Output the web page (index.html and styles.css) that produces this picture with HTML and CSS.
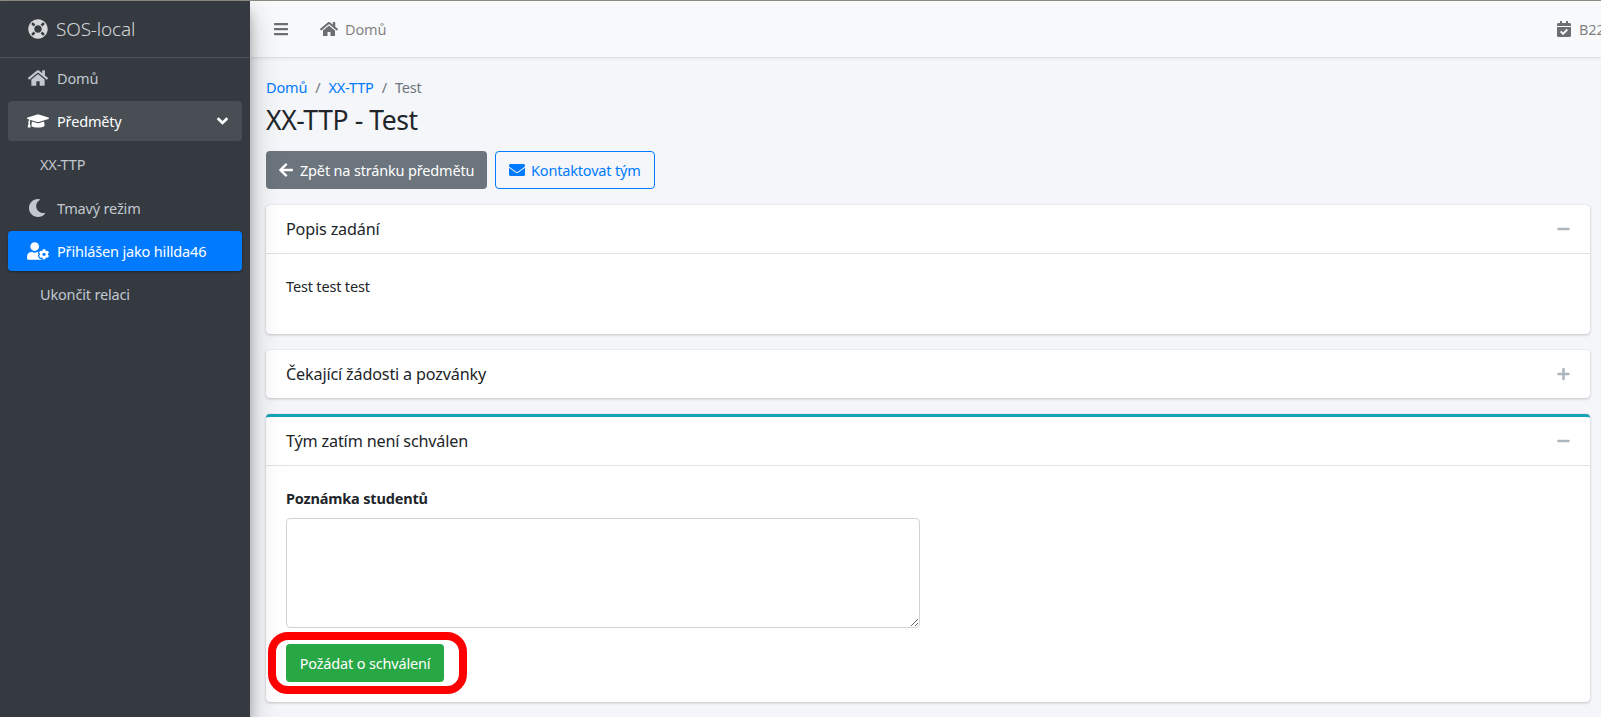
FILE: index.html
```html
<!DOCTYPE html>
<html lang="cs">
<head>
<meta charset="utf-8">
<title>XX-TTP - Test</title>
<link rel="stylesheet" href="styles.css">
</head>
<body>
<svg class="defs" aria-hidden="true">
  <symbol id="i-bars" viewBox="0 0 448 512"><path d="M16 132h416c8.837 0 16-7.163 16-16V76c0-8.837-7.163-16-16-16H16C7.163 60 0 67.163 0 76v40c0 8.837 7.163 16 16 16zm0 160h416c8.837 0 16-7.163 16-16v-40c0-8.837-7.163-16-16-16H16c-8.837 0-16 7.163-16 16v40c0 8.837 7.163 16 16 16zm0 160h416c8.837 0 16-7.163 16-16v-40c0-8.837-7.163-16-16-16H16c-8.837 0-16 7.163-16 16v40c0 8.837 7.163 16 16 16z"/></symbol>
  <symbol id="i-home" viewBox="0 0 576 512"><path d="M280.37 148.26L96 300.11V464a16 16 0 0 0 16 16l112.06-.29a16 16 0 0 0 15.92-16V368a16 16 0 0 1 16-16h64a16 16 0 0 1 16 16v95.64a16 16 0 0 0 16 16.05L464 480a16 16 0 0 0 16-16V300L295.67 148.26a12.19 12.19 0 0 0-15.3 0zM571.6 251.47L488 182.56V44.05a12 12 0 0 0-12-12h-56a12 12 0 0 0-12 12v72.61L318.47 43a48 48 0 0 0-61 0L4.34 251.47a12 12 0 0 0-1.6 16.9l25.5 31A12 12 0 0 0 45.15 301l235.22-193.74a12.19 12.19 0 0 1 15.3 0L530.9 301a12 12 0 0 0 16.9-1.6l25.5-31a12 12 0 0 0-1.7-16.93z"/></symbol>
  <symbol id="i-cap" viewBox="0 0 640 512"><path d="M622.34 153.2L343.4 67.5c-15.2-4.67-31.6-4.67-46.79 0L17.66 153.2c-23.54 7.23-23.54 38.36 0 45.59l48.63 14.94c-10.67 13.19-17.23 29.28-17.88 46.9C38.78 266.15 32 276.11 32 288c0 10.78 5.68 19.85 13.86 25.65L20.33 428.53C18.11 438.52 25.71 448 35.94 448h56.11c10.24 0 17.84-9.48 15.62-19.47L82.14 313.65C90.32 307.85 96 298.78 96 288c0-11.57-6.47-21.25-15.66-26.87.76-15.02 8.44-28.3 20.69-36.72L296.6 284.5c9.06 2.78 26.44 6.25 46.79 0l278.95-85.7c23.55-7.24 23.55-38.36 0-45.6zM352.79 315.09c-28.53 8.76-52.84 3.92-65.59 0l-145.02-44.55L128 384c0 35.35 85.96 64 192 64s192-28.65 192-64l-14.18-113.47-145.03 44.56z"/></symbol>
  <symbol id="i-moon" viewBox="0 0 512 512"><path d="M283.211 512c78.962 0 151.079-35.925 198.857-94.792 7.068-8.708-.639-21.43-11.562-19.35-124.203 23.654-238.262-71.576-238.262-196.954 0-72.222 38.662-138.635 101.498-174.394 9.686-5.512 7.25-20.197-3.756-22.23A258.156 258.156 0 0 0 283.211 0c-141.309 0-256 114.511-256 256 0 141.309 114.511 256 256 256z"/></symbol>
  <symbol id="i-usercog" viewBox="0 0 640 512"><path d="M610.5 373.3c2.6-14.1 2.6-28.5 0-42.6l25.8-14.9c3-1.7 4.3-5.2 3.3-8.5-6.7-21.6-18.2-41.2-33.2-57.4-2.3-2.5-6-3.1-9-1.4l-25.8 14.9c-10.9-9.3-23.4-16.5-36.9-21.3v-29.8c0-3.4-2.4-6.4-5.7-7.1-22.3-5-45-4.8-66.2 0-3.3.7-5.7 3.7-5.7 7.1v29.8c-13.5 4.8-26 12-36.9 21.3l-25.8-14.9c-2.9-1.7-6.7-1.1-9 1.4-15 16.2-26.5 35.8-33.2 57.4-1 3.3.4 6.8 3.3 8.5l25.8 14.9c-2.6 14.1-2.6 28.5 0 42.6l-25.8 14.9c-3 1.7-4.3 5.2-3.3 8.5 6.7 21.6 18.2 41.1 33.2 57.4 2.3 2.5 6 3.1 9 1.4l25.8-14.9c10.9 9.3 23.4 16.5 36.9 21.3v29.8c0 3.4 2.4 6.4 5.7 7.1 22.3 5 45 4.8 66.2 0 3.3-.7 5.7-3.7 5.7-7.1v-29.8c13.5-4.8 26-12 36.9-21.3l25.8 14.9c2.9 1.7 6.7 1.1 9-1.4 15-16.2 26.5-35.8 33.2-57.4 1-3.3-.4-6.8-3.3-8.5l-25.8-14.9zM496 400.5c-26.8 0-48.5-21.8-48.5-48.5s21.8-48.5 48.5-48.5 48.5 21.8 48.5 48.5-21.7 48.5-48.5 48.5zM224 256c70.7 0 128-57.3 128-128S294.7 0 224 0 96 57.3 96 128s57.3 128 128 128zm201.2 226.5c-2.3-1.2-4.6-2.6-6.8-3.9l-7.9 4.6c-6 3.4-12.8 5.3-19.6 5.3-10.9 0-21.4-4.6-28.9-12.6-18.3-19.8-32.3-43.9-40.2-69.6-5.5-17.7 1.9-36.4 17.9-45.7l7.9-4.6c-.1-2.6-.1-5.2 0-7.8l-7.9-4.6c-16-9.2-23.4-28-17.9-45.7.9-2.9 2.2-5.8 3.2-8.7-3.8-.3-7.5-1.2-11.4-1.2h-16.7c-22.2 10.2-46.9 16-72.9 16s-50.6-5.8-72.9-16h-16.7C60.2 288 0 348.2 0 422.4V464c0 26.5 21.5 48 48 48h352c10.1 0 19.5-3.2 27.2-8.5-1.2-3.8-2-7.7-2-11.8v-9.2z"/></symbol>
  <symbol id="i-ring" viewBox="0 0 512 512"><path d="M256 8C119.033 8 8 119.033 8 256s111.033 248 248 248 248-111.033 248-248S392.967 8 256 8zm173.696 119.559l-63.399 63.399c-10.987-18.559-26.67-34.252-45.255-45.255l63.399-63.399a218.396 218.396 0 0 1 45.255 45.255zM256 352c-53.019 0-96-42.981-96-96s42.981-96 96-96 96 42.981 96 96-42.981 96-96 96zM127.559 82.304l63.399 63.399c-18.559 10.987-34.252 26.67-45.255 45.255l-63.399-63.399a218.372 218.372 0 0 1 45.255-45.255zM82.304 384.441l63.399-63.399c10.987 18.559 26.67 34.252 45.255 45.255l-63.399 63.399a218.396 218.396 0 0 1-45.255-45.255zm302.137 45.255l-63.399-63.399c18.559-10.987 34.252-26.67 45.255-45.255l63.399 63.399a218.403 218.403 0 0 1-45.255 45.255z"/></symbol>
  <symbol id="i-cal" viewBox="0 0 448 512"><path d="M436 160H12c-6.627 0-12-5.373-12-12v-36c0-26.51 21.49-48 48-48h48V12c0-6.627 5.373-12 12-12h40c6.627 0 12 5.373 12 12v52h128V12c0-6.627 5.373-12 12-12h40c6.627 0 12 5.373 12 12v52h48c26.51 0 48 21.49 48 48v36c0 6.627-5.373 12-12 12zM12 192h424c6.627 0 12 5.373 12 12v260c0 26.51-21.49 48-48 48H48c-26.51 0-48-21.49-48-48V204c0-6.627 5.373-12 12-12zm333.296 95.947l-28.169-28.398c-4.667-4.705-12.265-4.736-16.97-.068L194.12 364.665l-45.98-46.352c-4.667-4.705-12.266-4.736-16.971-.068l-28.397 28.17c-4.705 4.667-4.736 12.265-.068 16.97l82.601 83.269c4.667 4.705 12.265 4.736 16.97.068l142.953-141.805c4.705-4.667 4.736-12.265.068-16.97z"/></symbol>
  <symbol id="i-left" viewBox="0 0 448 512"><path d="M257.5 445.1l-22.2 22.2c-9.4 9.4-24.6 9.4-33.9 0L7 273c-9.4-9.4-9.4-24.6 0-33.9L201.4 44.7c9.4-9.4 24.6-9.4 33.9 0l22.2 22.2c9.5 9.5 9.3 25-.4 34.3L136.6 216H424c13.3 0 24 10.7 24 24v32c0 13.3-10.7 24-24 24H136.6l120.5 114.8c9.8 9.3 10 24.8.4 34.3z"/></symbol>
  <symbol id="i-mail" viewBox="0 0 512 512"><path d="M502.3 190.8c3.9-3.1 9.7-.2 9.7 4.7V400c0 26.5-21.5 48-48 48H48c-26.5 0-48-21.5-48-48V195.6c0-5 5.7-7.8 9.7-4.7 22.4 17.4 52.1 39.5 154.1 113.6 21.1 15.4 56.7 47.8 92.2 47.6 35.7.3 72-32.8 92.3-47.6 102-74.1 131.6-96.3 154-113.7zM256 320c23.2.4 56.6-29.2 73.4-41.4 132.7-96.3 142.8-104.7 173.4-128.7 5.8-4.5 9.2-11.5 9.2-18.9v-19c0-26.5-21.5-48-48-48H48C21.5 64 0 85.5 0 112v19c0 7.4 3.4 14.3 9.2 18.9 30.6 23.9 40.7 32.4 173.4 128.7 16.8 12.2 50.2 41.8 73.4 41.4z"/></symbol>
  <symbol id="i-plus" viewBox="0 0 448 512"><path d="M416 208H272V64c0-17.67-14.33-32-32-32h-32c-17.67 0-32 14.33-32 32v144H32c-17.67 0-32 14.33-32 32v32c0 17.67 14.33 32 32 32h144v144c0 17.67 14.33 32 32 32h32c17.67 0 32-14.33 32-32V304h144c17.67 0 32-14.33 32-32v-32c0-17.67-14.33-32-32-32z"/></symbol>
  <symbol id="i-minus" viewBox="0 0 448 512"><path d="M416 208H32c-17.67 0-32 14.33-32 32v32c0 17.67 14.33 32 32 32h384c17.67 0 32-14.33 32-32v-32c0-17.67-14.33-32-32-32z"/></symbol>
  <symbol id="i-down" viewBox="0 0 320 512"><path d="M143 352.3L7 216.3c-9.4-9.4-9.4-24.6 0-33.9l22.6-22.6c9.4-9.4 24.6-9.4 33.9 0l96.4 96.4 96.4-96.4c9.4-9.4 24.6-9.4 33.9 0l22.6 22.6c9.4 9.4 9.4 24.6 0 33.9l-136 136c-9.2 9.4-24.4 9.4-33.8 0z"/></symbol>
</svg>

<div class="wrapper">
  <aside class="sidebar">
    <a class="brand">
      <svg class="brand-icon"><use href="#i-ring"/></svg>
      <span class="brand-text">SOS-local</span>
    </a>
    <nav class="side-nav">
      <a class="side-link"><span class="nav-icon"><svg class="ic-home"><use href="#i-home"/></svg></span>Domů</a>
      <a class="side-link open"><span class="nav-icon"><svg class="ic-cap"><use href="#i-cap"/></svg></span>Předměty<svg class="chev"><use href="#i-down"/></svg></a>
      <a class="side-link sub">XX-TTP</a>
      <a class="side-link"><span class="nav-icon"><svg class="ic-moon"><use href="#i-moon"/></svg></span>Tmavý režim</a>
      <a class="side-link active"><span class="nav-icon"><svg class="ic-cap"><use href="#i-usercog"/></svg></span>Přihlášen jako hillda46</a>
      <a class="side-link sub">Ukončit relaci</a>
    </nav>
  </aside>

  <div class="main">
    <header class="topbar">
      <svg class="top-bars"><use href="#i-bars"/></svg>
      <svg class="top-home"><use href="#i-home"/></svg>
      <span class="top-label">Domů</span>
      <span class="top-right"><svg class="top-cal"><use href="#i-cal"/></svg><span class="top-label">B22</span></span>
    </header>

    <main class="content">
      <ol class="crumbs">
        <li><a class="link">Domů</a></li>
        <li class="sep">/</li>
        <li><a class="link">XX-TTP</a></li>
        <li class="sep">/</li>
        <li class="current">Test</li>
      </ol>
      <h1 class="title">XX-TTP - Test</h1>
      <div class="actions">
        <a class="btn btn-grey"><svg class="ic-btn"><use href="#i-left"/></svg>Zpět na stránku předmětu</a>
        <a class="btn btn-outline"><svg class="ic-btn-mail"><use href="#i-mail"/></svg>Kontaktovat tým</a>
      </div>

      <section class="card">
        <div class="card-head"><span class="card-title">Popis zadání</span><svg class="tool"><use href="#i-minus"/></svg></div>
        <div class="card-body"><p class="para">Test test test</p></div>
      </section>

      <section class="card">
        <div class="card-head flat"><span class="card-title">Čekající žádosti a pozvánky</span><svg class="tool"><use href="#i-plus"/></svg></div>
      </section>

      <section class="card card-info">
        <div class="card-head"><span class="card-title">Tým zatím není schválen</span><svg class="tool"><use href="#i-minus"/></svg></div>
        <div class="card-body">
          <label class="field-label" for="note">Poznámka studentů</label>
          <textarea class="note" id="note"></textarea>
          <div class="submit-wrap">
            <a class="btn btn-green">Požádat o schválení</a>
            <span class="ring"></span>
          </div>
        </div>
      </section>
    </main>
  </div>
</div>
</body>
</html>
```

FILE: styles.css
```css
* { box-sizing: border-box; }
html, body { margin: 0; height: 100%; overflow: hidden; }
body {
  font-family: "Noto Sans", "Lato", sans-serif;
  font-size: 14.5px;
  letter-spacing: -0.17px;
  line-height: 24px;
  color: #212529;
  background: #f4f6f9;
}
.defs { display: none; }
svg { fill: currentColor; display: block; flex: none; }

.wrapper {
  display: flex;
  height: 100%;
  border-top: 1px solid #8f8b85;
}

/* Sidebar */
.sidebar {
  width: 250px;
  flex: none;
  background: #343a40;
  color: #c2c7d0;
  box-shadow: 0 14px 28px rgba(0,0,0,.25), 0 10px 10px rgba(0,0,0,.22);
  position: relative;
  z-index: 2;
}
.brand {
  display: flex;
  align-items: center;
  height: 57px;
  padding-left: 28px;
  border-bottom: 1px solid #4b545c;
  color: rgba(255,255,255,.8);
}
.brand-icon { width: 20px; height: 20px; margin-right: 8px; }
.brand-text { font-size: 19px; font-weight: 300; }
.side-nav { padding: 0 8px; }
.side-link {
  display: flex;
  align-items: center;
  height: 40px;
  margin-bottom: 3.2px;
  padding-left: 16px;
  border-radius: 4px;
  color: #c2c7d0;
}
.nav-icon {
  width: 33px;
  display: flex;
  justify-content: flex-start;
  padding-left: 4px;
}
.ic-home { width: 20px; height: 18px; }
.ic-cap { width: 22px; height: 18px; margin-left: -1px; }
.ic-moon { width: 18px; height: 18px; }
.side-link.open { background: rgba(255,255,255,.1); color: #fff; }
.side-link.active {
  background: #007bff;
  color: #fff;
  box-shadow: 0 1px 3px rgba(0,0,0,.12), 0 1px 2px rgba(0,0,0,.24);
}
.side-link.sub { padding-left: 32px; }
.chev { width: 11px; height: 18px; margin-left: auto; margin-right: 14px; }

/* Top bar */
.main { flex: 1; min-width: 0; display: flex; flex-direction: column; }
.topbar {
  display: flex;
  align-items: center;
  height: 57px;
  flex: none;
  background: #f8f9fa;
  border-bottom: 1px solid #dee2e6;
  box-shadow: 0 1px 3px rgba(0,0,0,.06);
  color: rgba(0,0,0,.5);
  padding-left: 24px;
  white-space: nowrap;
}
.top-bars { width: 14px; height: 16px; color: #6c6e70; }
.top-home { width: 18px; height: 16px; margin-left: 32px; margin-right: 7px; color: #6c6e70; }
.top-right { margin-left: auto; width: 44px; display: flex; align-items: center; overflow: hidden; }
.top-cal { width: 14px; height: 16px; margin-right: 8px; color: #6c6e70; }

/* Content */
.content { padding: 0 11px 0 16px; }
.crumbs {
  display: flex;
  list-style: none;
  margin: 0;
  padding: 17px 0 0;
}
.link { color: #007bff; }
.sep { color: #6c757d; margin: 0 8px; }
.current { color: #6c757d; }
.title {
  margin: 3px 0 0;
  font-size: 26.5px;
  letter-spacing: -0.4px;
  line-height: 36px;
  font-weight: 400;
  height: 40px;
}
.actions { display: flex; gap: 8px; margin-top: 9px; }
.btn {
  display: inline-flex;
  align-items: center;
  height: 38px;
  padding: 0 12px;
  border-radius: 4px;
  border: 1px solid transparent;
  white-space: nowrap;
}
.btn-grey { background: #6c757d; color: #fff; width: 221px; }
.btn-outline { border-color: #007bff; color: #007bff; width: 160px; }
.btn-green { background: #28a745; color: #fff; width: 158px; justify-content: center; padding: 0; }
.ic-btn { width: 14px; height: 16px; margin-right: 7px; }
.ic-btn-mail { width: 16px; height: 16px; margin-right: 6px; margin-left: 1px; }

.card {
  background: #fff;
  border-radius: 4px;
  box-shadow: 0 0 1px rgba(0,0,0,.125), 0 1px 3px rgba(0,0,0,.2);
  margin-top: 16px;
}
.card-info { border-top: 3px solid #17a2b8; }
.card-head {
  display: flex;
  align-items: center;
  justify-content: space-between;
  height: 49px;
  padding: 0 20px;
  border-bottom: 1px solid #dfe2e5;
}
.card-head.flat { height: 48px; border-bottom: 0; }
.card-title { font-size: 16.2px; }
.tool { width: 13px; height: 14px; color: #adb5bd; }
.card-body { padding: 20px; }
.para { margin: 0 0 16px; }
.field-label { display: block; font-weight: 700; height: 24px; margin-bottom: 8px; }
.note {
  display: block;
  width: 634px;
  height: 110px;
  border: 1px solid #ced4da;
  border-radius: 4px;
  background: #fff;
  margin-bottom: 16px;
  outline: none;
}
.submit-wrap { position: relative; display: flex; }
.ring {
  position: absolute;
  left: -18px;
  top: -12px;
  width: 199px;
  height: 62px;
  border: 8px solid #f00;
  border-radius: 20px;
  pointer-events: none;
}
```
